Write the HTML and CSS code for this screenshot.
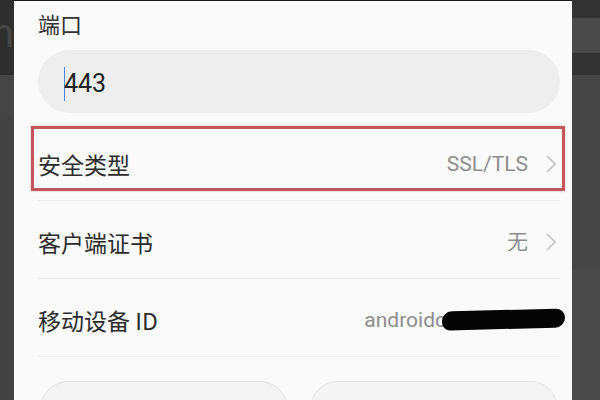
FILE: index.html
```html
<!DOCTYPE html>
<html lang="zh-CN">
<head>
    <meta charset="UTF-8">
    <meta name="viewport" content="width=device-width, initial-scale=1.0">
    <title>服务器设置</title>
    <link rel="stylesheet" href="styles.css">
</head>
<body>
    <div class="side side-left"><span class="ghost">n</span></div>

    <div class="panel">
        <div class="field-label">端口</div>
        <div class="field-input"><span class="caret"></span>443</div>

        <div class="row row-marked">
            <span class="row-title">安全类型</span>
            <span class="row-value">SSL/TLS</span>
            <svg class="chevron" width="12" height="18" viewBox="0 0 12 18">
                <polyline points="2,1 10,9 2,17" fill="none" stroke="#c2c2c2" stroke-width="1.6"/>
            </svg>
        </div>

        <div class="row">
            <span class="row-title">客户端证书</span>
            <span class="row-value">无</span>
            <svg class="chevron" width="12" height="18" viewBox="0 0 12 18">
                <polyline points="2,1 10,9 2,17" fill="none" stroke="#c2c2c2" stroke-width="1.6"/>
            </svg>
        </div>

        <div class="row">
            <span class="row-title">移动设备 ID</span>
            <span class="row-value device-id">androidc<span class="scribble"></span></span>
        </div>

        <div class="actions">
            <div class="action-button"></div>
            <div class="action-button"></div>
        </div>
    </div>

    <div class="side side-right"></div>
</body>
</html>
```

FILE: styles.css
```css
body {
    margin: 0;
    width: 600px;
    height: 400px;
    overflow: hidden;
    display: flex;
    background-color: #444;
    font-family: "Roboto", "Noto Sans CJK SC", sans-serif;
}

/* dark strips on both sides of the dialog */
.side {
    flex: none;
    height: 100%;
    overflow: hidden;
}

.side-left {
    width: 14px;
    background: linear-gradient(#2e2e2e 0, #2e2e2e 75px, #454545 75px, #454545 115px, #434343 115px);
}

.ghost {
    display: block;
    margin-left: -8px;
    margin-top: 14px;
    font-size: 40px;
    line-height: 40px;
    color: #464646;
}

.side-right {
    width: 28px;
    background: linear-gradient(#333 0, #333 18px, #4a4a4a 18px, #4a4a4a 53px, #333 53px, #333 75px, #464646 75px, #464646 270px, #4a4a4a 270px);
}

.panel {
    flex: 1;
    background-color: #fafafa;
    border-top: 1px solid #1a1a1a;
    padding: 7px 12px 0 24px;
    overflow: hidden;
}

.field-label {
    font-family: "Noto Sans CJK SC", sans-serif;
    font-size: 22px;
    line-height: 30px;
    color: #333;
}

.field-input {
    margin-top: 12px;
    height: 63px;
    box-sizing: border-box;
    padding-top: 4px;
    border-radius: 32px;
    background-color: #eeeeee;
    padding-left: 26px;
    display: flex;
    align-items: center;
    font-size: 25px;
    color: #222;
}

.caret {
    width: 0;
    height: 34px;
    border-left: 1.5px solid #4f82d6;
    margin-right: -1px;
}

.row {
    position: relative;
    height: 77px;
    display: flex;
    align-items: center;
    border-bottom: 1px solid #eeeeee;
}

.row-marked {
    margin-top: 10px;
}

/* red highlight frame drawn over the first row */
.row-marked::after {
    content: "";
    position: absolute;
    top: 3px;
    bottom: 9px;
    left: -7px;
    right: -5px;
    border: 3px solid #c4555b;
    box-shadow: 0 0 2px rgba(196, 85, 91, 0.4);
}

.row-title {
    flex: 1;
    font-family: "Noto Sans CJK SC", sans-serif;
    font-size: 23px;
    color: #2b2b2b;
    padding-top: 4px;
}

.row-title, .row-value {
    line-height: 30px;
}

.row-value {
    font-family: "Roboto", "Noto Sans CJK SC", sans-serif;
    font-size: 21px;
    color: #8d8d8d;
    padding-top: 4px;
}

.chevron {
    margin-left: 17px;
    margin-right: 3px;
    margin-top: 4px;
}

.device-id {
    display: flex;
    align-items: center;
    margin-right: -5px;
}

.scribble {
    display: inline-block;
    width: 123px;
    height: 19px;
    margin-left: -4px;
    background-color: #050505;
    border-radius: 10px 9px 10px 8px;
    transform: rotate(-1.5deg);
}

.actions {
    margin-top: 24px;
    padding: 0 2px;
    display: grid;
    grid-template-columns: 1fr 1fr;
    gap: 22px;
}

.action-button {
    height: 60px;
    border: 1px solid #e4e4e4;
    border-radius: 28px;
    background-color: #f4f4f4;
}
```
